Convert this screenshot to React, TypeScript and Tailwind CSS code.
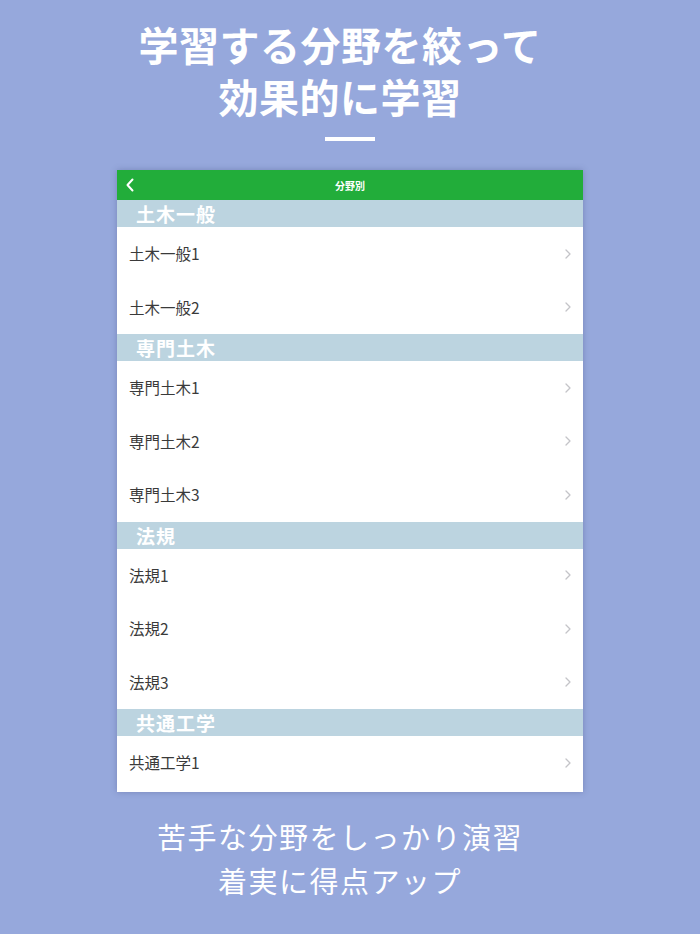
import React from "react";

const sections: { title: string; items: string[] }[] = [
  { title: "土木一般", items: ["土木一般1", "土木一般2"] },
  { title: "専門土木", items: ["専門土木1", "専門土木2", "専門土木3"] },
  { title: "法規", items: ["法規1", "法規2", "法規3"] },
  { title: "共通工学", items: ["共通工学1"] },
];

const font = { fontFamily: '"Noto Sans CJK JP", "Noto Sans", sans-serif' };

function Chevron() {
  return (
    <svg width="6" height="10" viewBox="0 0 6 10" className="mr-[12px]">
      <path d="M1 1l4 4-4 4" fill="none" stroke="#c4c4c8" strokeWidth="1.3" strokeLinecap="round" strokeLinejoin="round" />
    </svg>
  );
}

export default function App() {
  return (
    <div className="w-[700px] h-[934px] bg-[#96a8dc] flex flex-col items-center overflow-hidden" style={font}>
      <div className="mt-[18px] text-white font-semibold text-[40px] text-center tracking-[0.5px] pr-[20px] flex flex-col">
        <div className="h-[52px] leading-[52px]">学習する分野を絞って</div>
        <div className="h-[52px] leading-[52px]">効果的に学習</div>
      </div>
      <div className="mt-[15px] w-[50px] h-[4px] bg-white" />
      <div className="mt-[29px] w-[466px] h-[622px] bg-white shadow-[0_0_6px_rgba(60,70,120,0.35)] flex flex-col overflow-hidden">
        <div className="h-[30px] bg-[#22ad3a] flex items-center relative shrink-0">
          <svg width="10" height="14" viewBox="0 0 10 14" className="absolute left-[8px] top-[8px]">
            <path d="M7.5 1.5L2.5 7l5 5.5" fill="none" stroke="white" strokeWidth="2" strokeLinecap="round" strokeLinejoin="round" />
          </svg>
          <div className="flex-1 text-center text-white text-[10px] font-bold">分野別</div>
        </div>
        {sections.map((s) => (
          <div key={s.title} className="flex flex-col">
            <div className="h-[27px] bg-[#bcd4e0] text-white text-[19px] font-semibold leading-[27px] pl-[19px] tracking-[1px]">
              {s.title}
            </div>
            {s.items.map((it) => (
              <div key={it} className="h-[53.5px] flex items-center justify-between pl-[12px]">
                <span className="text-[15.5px] text-[#3a3a3a]">{it}</span>
                <Chevron />
              </div>
            ))}
          </div>
        ))}
      </div>
      <div className="mt-[22px] text-white text-[29px] text-center tracking-[1.5px] pr-[20px] flex flex-col">
        <div className="h-[44px] leading-[44px]">苦手な分野をしっかり演習</div>
        <div className="h-[44px] leading-[44px]">着実に得点アップ</div>
      </div>
    </div>
  );
}
